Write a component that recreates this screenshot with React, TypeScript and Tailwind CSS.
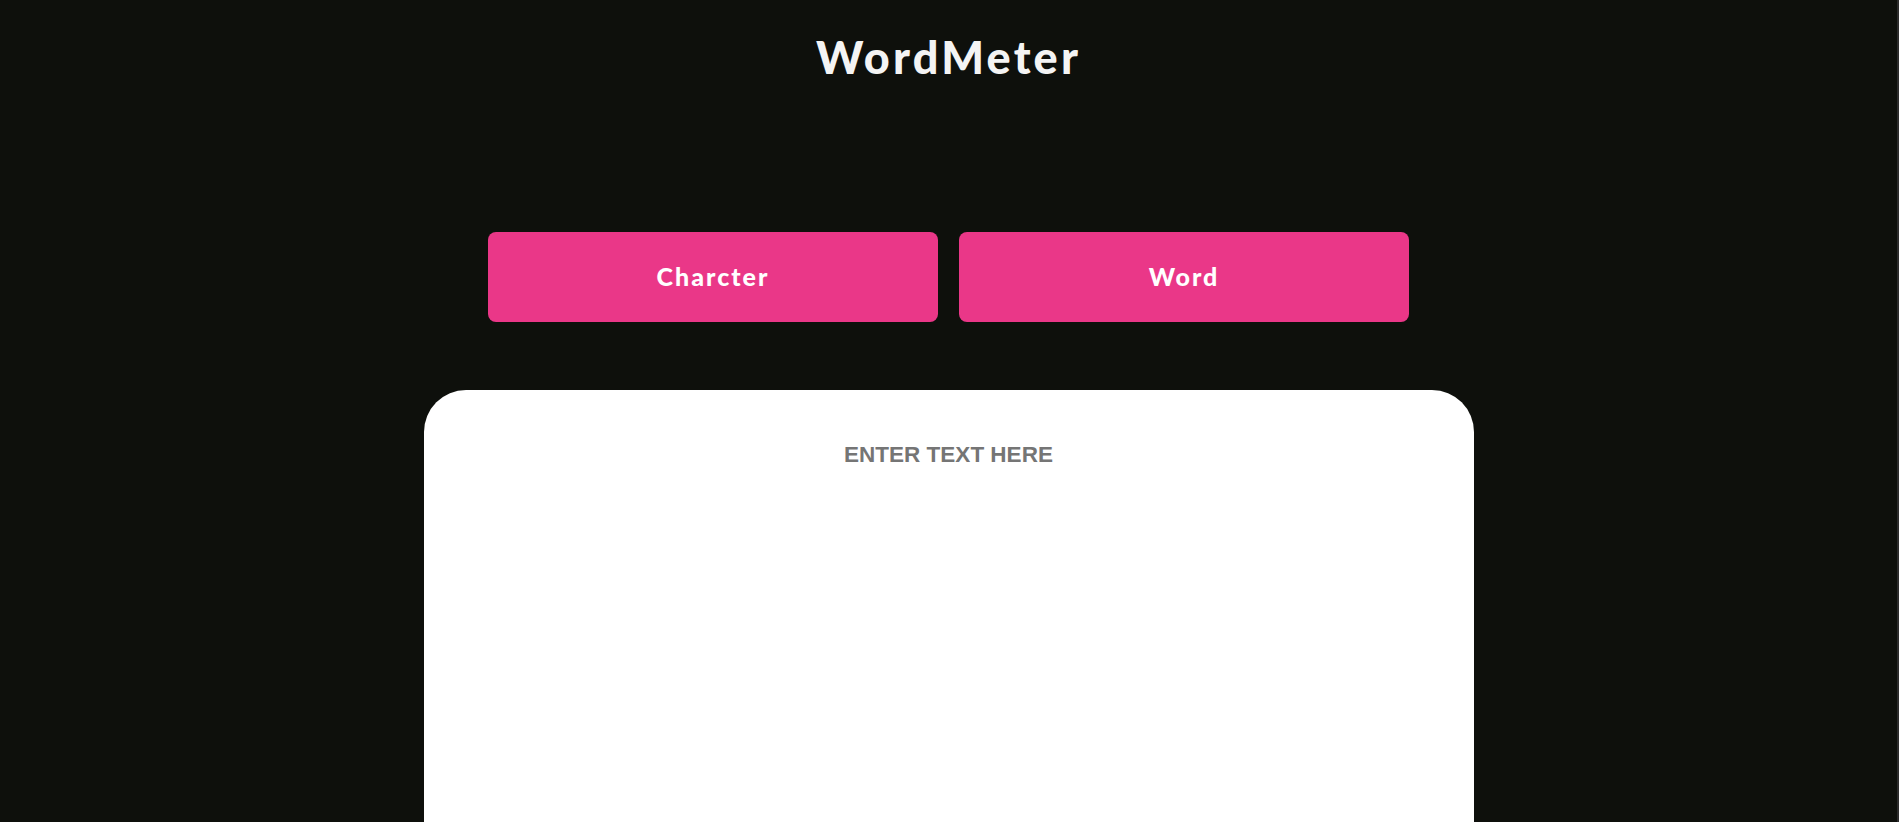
import { useState } from "react";

export default function App() {
  const [text, setText] = useState("");

  return (
    <div className="h-screen overflow-hidden bg-[#0e100c] border-r-2 border-[#2c2c2c] flex flex-col items-center">
      <h1 className="mt-[30px] font-['Lato',sans-serif] font-black text-[45px] leading-[1.2] text-[#f4f4f4] tracking-[3.2px]">
        WordMeter
      </h1>

      {/* count mode buttons */}
      <div className="mt-[148px] flex gap-[21px]">
        <button className="w-[450px] h-[90px] rounded-lg bg-[#ea3788] text-white font-['Lato',sans-serif] font-black text-[25px] tracking-[2px] cursor-pointer">
          Charcter
        </button>
        <button className="w-[450px] h-[90px] rounded-lg bg-[#ea3788] text-white font-['Lato',sans-serif] font-black text-[25px] tracking-[2px] cursor-pointer">
          Word
        </button>
      </div>

      <textarea
        value={text}
        onChange={(e) => setText(e.target.value)}
        placeholder="ENTER TEXT HERE"
        className="mt-[68px] w-[1050px] h-[600px] shrink-0 rounded-[42px] bg-white pt-[48px] px-10 text-center font-['Liberation_Sans',Arial,sans-serif] font-bold text-[22.5px] text-[#333] placeholder:text-[#757575] outline-none resize-none"
      />
    </div>
  );
}
